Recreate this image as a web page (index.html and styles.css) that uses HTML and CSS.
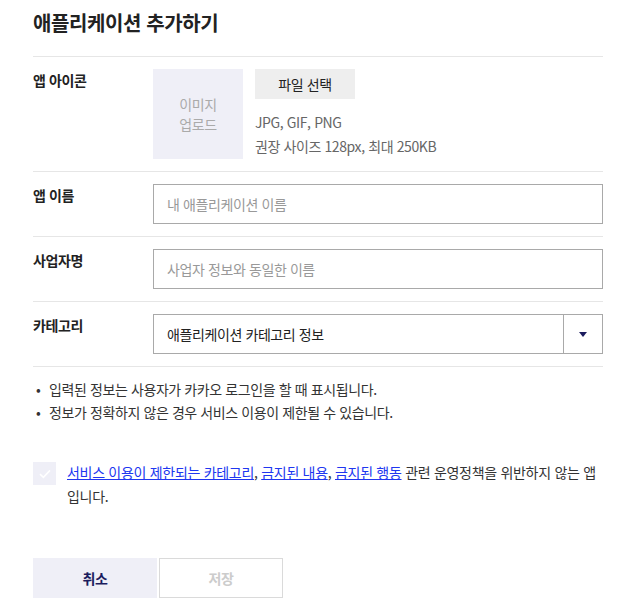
FILE: index.html
```html
<!DOCTYPE html>
<html lang="ko">
<head>
<meta charset="utf-8">
<link rel="stylesheet" href="styles.css">
</head>
<body>
<div class="page">
  <h1 class="title">애플리케이션 추가하기</h1>

  <div class="row">
    <div class="label">앱 아이콘</div>
    <div class="field icon-field">
      <div class="upload">이미지<br>업로드</div>
      <div class="icon-info">
        <button class="file-btn" type="button">파일 선택</button>
        <p class="hint">JPG, GIF, PNG</p>
        <p class="hint">권장 사이즈 128px, 최대 250KB</p>
      </div>
    </div>
  </div>

  <div class="row">
    <div class="label">앱 이름</div>
    <div class="field"><div class="input placeholder">내 애플리케이션 이름</div></div>
  </div>

  <div class="row">
    <div class="label">사업자명</div>
    <div class="field"><div class="input placeholder">사업자 정보와 동일한 이름</div></div>
  </div>

  <div class="row">
    <div class="label">카테고리</div>
    <div class="field">
      <div class="select">
        <span class="select-value">애플리케이션 카테고리 정보</span>
        <span class="select-arrow"><svg width="8" height="5" viewBox="0 0 8 5"><path d="M0 0H8L4 5Z" fill="#1b1c5e"/></svg></span>
      </div>
    </div>
  </div>

  <ul class="notes">
    <li>입력된 정보는 사용자가 카카오 로그인을 할 때 표시됩니다.</li>
    <li>정보가 정확하지 않은 경우 서비스 이용이 제한될 수 있습니다.</li>
  </ul>

  <div class="agree">
    <span class="checkbox"><svg width="12" height="10" viewBox="0 0 12 10"><path d="M1 5.2L4.4 8.4L11 1.4" fill="none" stroke="#fff" stroke-width="1.6"/></svg></span>
    <p class="agree-text"><a href="#">서비스 이용이 제한되는 카테고리</a>, <a href="#">금지된 내용</a>, <a href="#">금지된 행동</a> 관련 운영정책을 위반하지 않는 앱<br>입니다.</p>
  </div>

  <div class="actions">
    <button class="btn btn-cancel" type="button">취소</button>
    <button class="btn btn-save" type="button">저장</button>
  </div>
</div>
</body>
</html>
```

FILE: styles.css
```css
* { box-sizing: border-box; }
html, body { margin: 0; padding: 0; background: #fff; }
body {
  font-family: "Noto Sans CJK KR", "Noto Sans", sans-serif;
  color: #222;
  font-size: 14px;
  letter-spacing: -0.4px;
}
.page {
  width: 570px;
  margin-left: 33px;
}
.title {
  margin: 0;
  padding: 8px 0 18px;
  font-size: 20px;
  line-height: 30px;
  font-weight: 700;
  color: #222;
  border-bottom: 1px solid #e6e6e6;
}
.row {
  display: flex;
  padding: 12px 0;
  border-bottom: 1px solid #e6e6e6;
}
.label {
  width: 120px;
  flex: none;
  font-size: 14px;
  font-weight: 700;
  line-height: 22px;
  color: #222;
}
.field { flex: 1; }
.icon-field { display: flex; gap: 12px; }
.upload {
  width: 90px;
  height: 90px;
  background: #efeff7;
  color: #aaa;
  font-size: 14px;
  line-height: 20px;
  display: flex;
  align-items: center;
  justify-content: center;
  text-align: center;
}
.icon-info { display: flex; flex-direction: column; }
.file-btn {
  width: 100px;
  height: 30px;
  border: none;
  background: #eeeeee;
  font-family: inherit;
  font-size: 14px;
  letter-spacing: -0.4px;
  color: #222;
  padding: 0;
  margin-bottom: 11px;
}
.hint {
  margin: 0;
  font-size: 14px;
  line-height: 24px;
  color: #666;
}
.input {
  height: 40px;
  border: 1px solid #a9a9a9;
  padding: 0 13px;
  line-height: 38px;
  font-size: 14px;
}
.placeholder { color: #999; }
.select {
  height: 40px;
  border: 1px solid #a9a9a9;
  display: flex;
  align-items: stretch;
}
.select-value {
  flex: 1;
  padding: 0 13px;
  line-height: 38px;
  font-size: 14px;
  color: #222;
}
.select-arrow {
  width: 39px;
  border-left: 1px solid #a9a9a9;
  display: flex;
  align-items: center;
  justify-content: center;
}
.notes {
  list-style: none;
  margin: 0;
  padding: 11px 0 0;
}
.notes li {
  position: relative;
  padding-left: 16px;
  font-size: 14px;
  line-height: 23px;
  color: #333;
}
.notes li::before {
  content: "•";
  position: absolute;
  left: 3px;
  top: 0;
}
.agree {
  display: flex;
  gap: 11px;
  margin-top: 38px;
}
.checkbox {
  width: 23px;
  height: 23px;
  flex: none;
  background: #efeff7;
  display: flex;
  align-items: center;
  justify-content: center;
}
.agree-text {
  margin: -2px 0 0;
  font-size: 14px;
  line-height: 24px;
  letter-spacing: -0.3px;
  color: #333;
}
.agree-text a { color: #2036f0; text-decoration: underline; }
.actions {
  display: flex;
  gap: 2px;
  margin-top: 50px;
}
.btn {
  width: 124px;
  height: 40px;
  font-family: inherit;
  font-size: 14px;
  letter-spacing: -0.4px;
  font-weight: 700;
  padding: 0;
}
.btn-cancel { background: #efeff7; border: none; color: #1b1c5e; }
.btn-save { background: #fff; border: 1px solid #dadada; color: #ccc; }
```
